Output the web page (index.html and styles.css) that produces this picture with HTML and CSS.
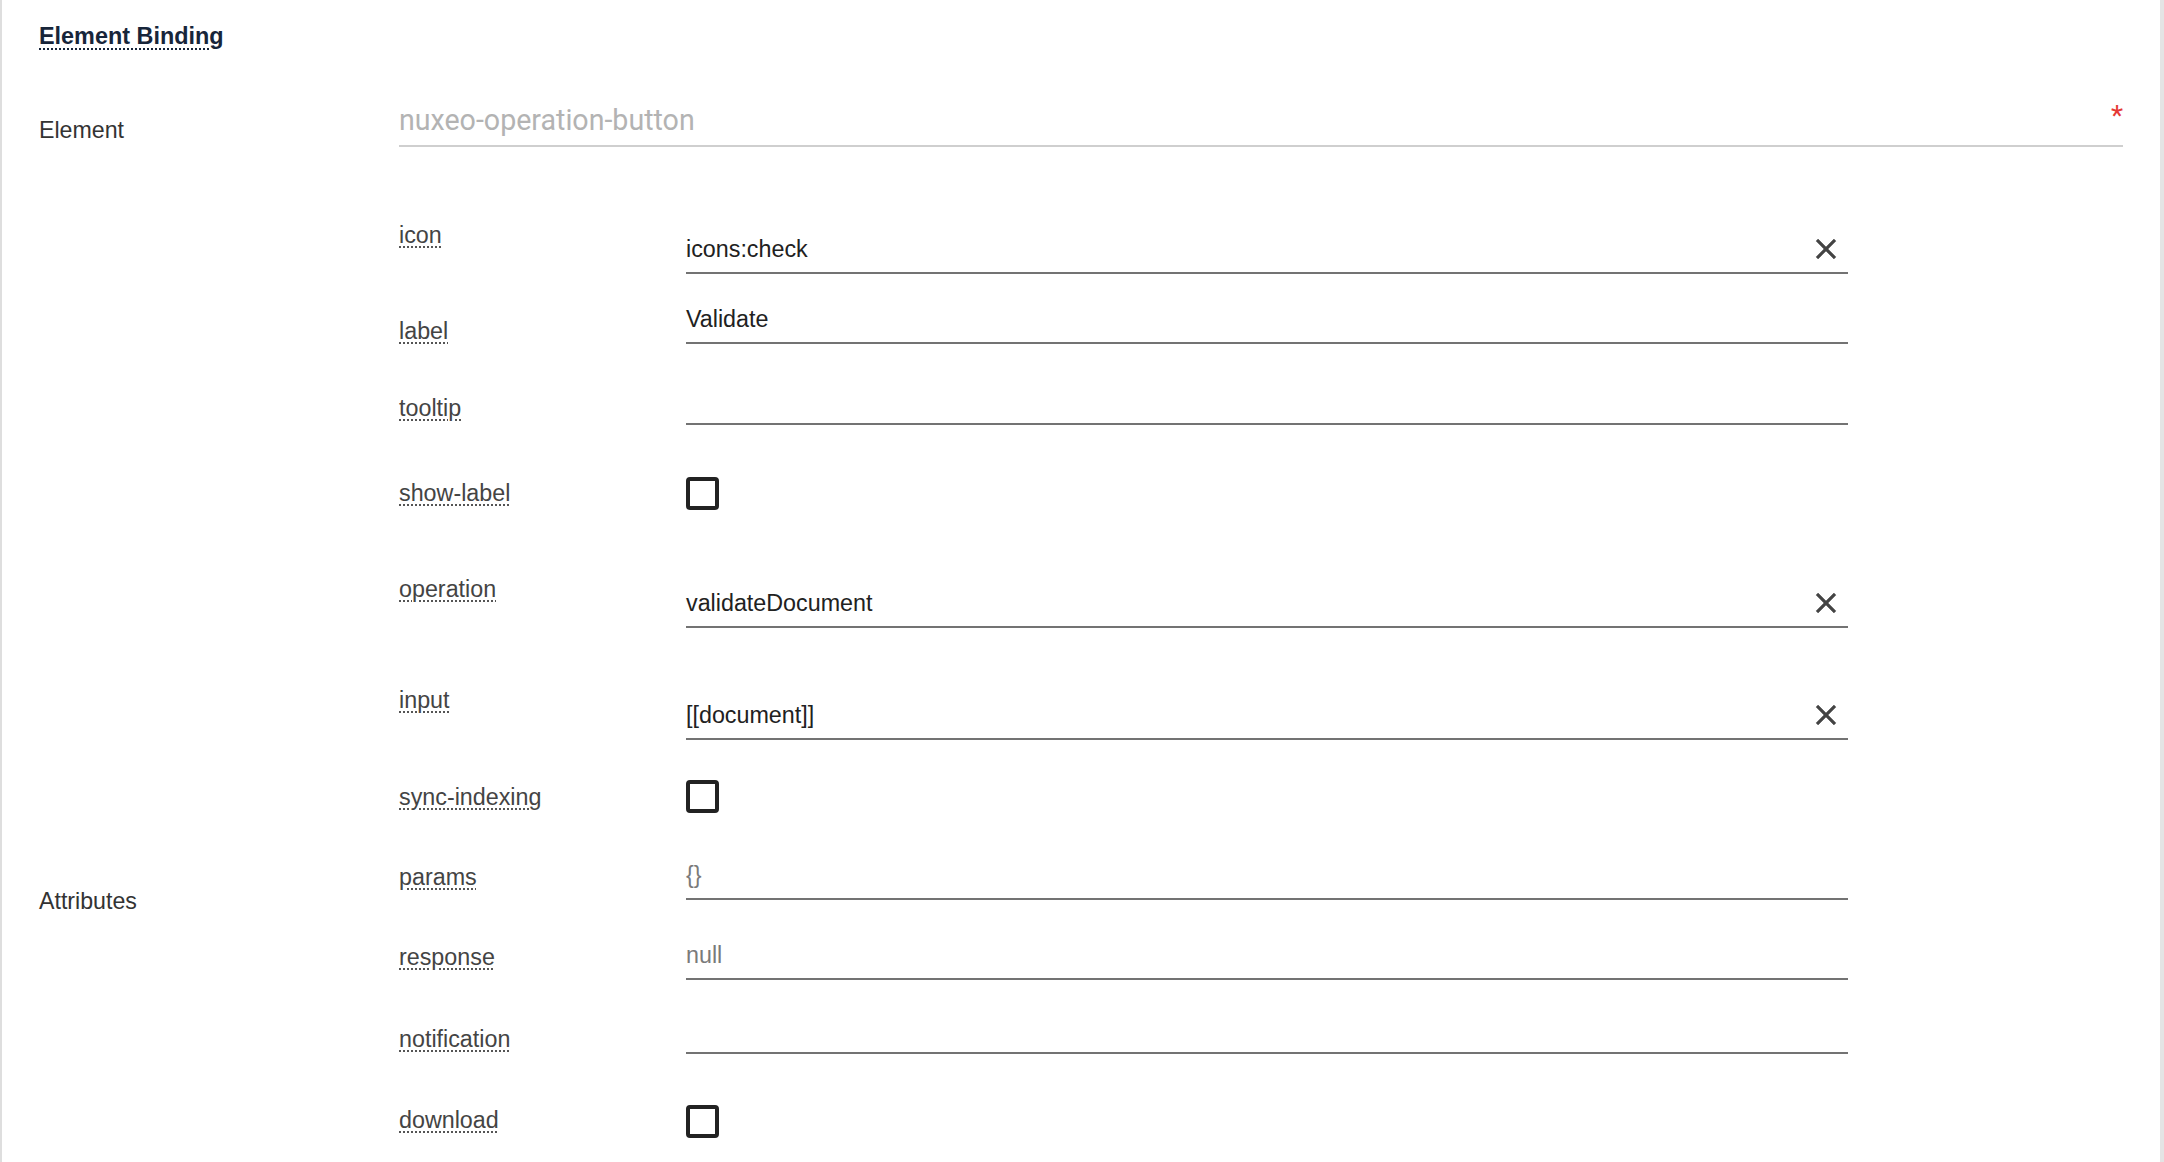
FILE: index.html
```html
<!DOCTYPE html>
<html lang="en">
<head>
<meta charset="utf-8">
<title>Element Binding</title>
<link rel="stylesheet" href="styles.css">
</head>
<body>
<div class="page">
  <h2 class="title"><abbr title="Element Binding">Element Binding</abbr></h2>

  <div class="section sec-element">
    <div class="sec-label">Element</div>
    <div class="el-field">
      <span class="el-placeholder">nuxeo-operation-button</span>
      <span class="req">*</span>
    </div>
  </div>

  <div class="section sec-attrs">
    <div class="sec-label attrs-label">Attributes</div>
    <div class="attrs">
      <div class="row r-icon">
        <div class="lbl"><abbr title="icon">icon</abbr></div>
        <div class="fld text"><span class="val">icons:check</span><svg class="clear-ico" viewBox="0 0 24 24"><path d="M19 6.41L17.59 5 12 10.59 6.41 5 5 6.41 10.59 12 5 17.59 6.41 19 12 13.41 17.59 19 19 17.59 13.41 12z"/></svg></div>
      </div>
      <div class="row r-label">
        <div class="lbl"><abbr title="label">label</abbr></div>
        <div class="fld text"><span class="val">Validate</span></div>
      </div>
      <div class="row r-tooltip">
        <div class="lbl"><abbr title="tooltip">tooltip</abbr></div>
        <div class="fld text"><span class="val"></span></div>
      </div>
      <div class="row r-show">
        <div class="lbl"><abbr title="show-label">show-label</abbr></div>
        <div class="fld"><div class="cb"></div></div>
      </div>
      <div class="row r-op">
        <div class="lbl"><abbr title="operation">operation</abbr></div>
        <div class="fld text"><span class="val">validateDocument</span><svg class="clear-ico" viewBox="0 0 24 24"><path d="M19 6.41L17.59 5 12 10.59 6.41 5 5 6.41 10.59 12 5 17.59 6.41 19 12 13.41 17.59 19 19 17.59 13.41 12z"/></svg></div>
      </div>
      <div class="row r-input">
        <div class="lbl"><abbr title="input">input</abbr></div>
        <div class="fld text"><span class="val">[[document]]</span><svg class="clear-ico" viewBox="0 0 24 24"><path d="M19 6.41L17.59 5 12 10.59 6.41 5 5 6.41 10.59 12 5 17.59 6.41 19 12 13.41 17.59 19 19 17.59 13.41 12z"/></svg></div>
      </div>
      <div class="row r-sync">
        <div class="lbl"><abbr title="sync-indexing">sync-indexing</abbr></div>
        <div class="fld"><div class="cb"></div></div>
      </div>
      <div class="row r-params">
        <div class="lbl"><abbr title="params">params</abbr></div>
        <div class="fld text"><span class="val ph">{}</span></div>
      </div>
      <div class="row r-resp">
        <div class="lbl"><abbr title="response">response</abbr></div>
        <div class="fld text"><span class="val ph">null</span></div>
      </div>
      <div class="row r-notif">
        <div class="lbl"><abbr title="notification">notification</abbr></div>
        <div class="fld text"><span class="val"></span></div>
      </div>
      <div class="row r-dl">
        <div class="lbl"><abbr title="download">download</abbr></div>
        <div class="fld"><div class="cb"></div></div>
      </div>
    </div>
  </div>
</div>
</body>
</html>
```

FILE: styles.css
```css
html, body {
  margin: 0;
  padding: 0;
  background: #ffffff;
  overflow: hidden;
}

body {
  font-family: "Liberation Sans", Arial, Helvetica, sans-serif;
}

.page {
  box-sizing: border-box;
  width: 2164px;
  min-height: 1162px;
  border-left: 2px solid #dedede;
  border-right: 4px solid #e4e4e4;
  padding: 22px 37px 0 37px;
}

.title {
  margin: 0;
  font-size: 23.4px;
  line-height: 28px;
  font-weight: 700;
  color: #17253a;
}

.title abbr {
  text-decoration: underline dotted;
  text-decoration-thickness: 2px;
  text-underline-offset: 4px;
}

.section {
  display: grid;
  grid-template-columns: 360px 1fr;
  align-items: start;
}

.sec-element {
  margin-top: 53px;
}

.sec-label {
  font-size: 23.2px;
  line-height: 28px;
  color: #333333;
}

.sec-element .sec-label {
  margin-top: 13px;
}

.el-field {
  display: flex;
  align-items: flex-start;
  border-bottom: 2px solid #cfcfcf;
  padding-bottom: 8px;
}

.el-placeholder {
  flex: 1;
  font-family: Roboto, "Liberation Sans", sans-serif;
  font-size: 28.6px;
  line-height: 34px;
  color: #b3b3b3;
}

.req {
  font-family: Roboto, "Liberation Sans", sans-serif;
  font-size: 28px;
  line-height: 26px;
  color: #e53935;
}

.sec-attrs {
  margin-top: 74px;
}

.attrs-label {
  margin-top: 666px;
}

.attrs {
  display: flex;
  flex-direction: column;
}

.row {
  display: grid;
  grid-template-columns: 287px 1162px;
  align-items: start;
}

.lbl {
  margin-top: var(--lm, 0px);
  font-size: 23.3px;
  line-height: 28px;
  color: #444444;
}

.lbl abbr {
  text-decoration: underline dotted;
  text-decoration-thickness: 2px;
  text-underline-offset: 3px;
  text-decoration-color: #555555;
}

.fld {
  margin-top: var(--fm, 0px);
}

.text {
  display: flex;
  align-items: flex-start;
  border-bottom: 2px solid #737373;
  padding-bottom: 10px;
  font-size: 23.3px;
  line-height: 28px;
  color: #212121;
}

.val {
  flex: 1;
  min-height: 28px;
  padding-top: 1px;
  margin-bottom: -1px;
}

.ph {
  color: #7a7a7a;
}

.clear-ico {
  flex: none;
  width: 34px;
  height: 34px;
  margin: -2px 5px -4px 0;
  fill: #444444;
  stroke: #444444;
  stroke-width: 0.35;
}

.cb {
  box-sizing: border-box;
  width: 33px;
  height: 33px;
  border: 4px solid #222222;
  border-radius: 4px;
}

.r-icon   { height: 83px;  --lm: 0px;  --fm: 13px; }
.r-label  { height: 81px;  --lm: 13px; --fm: 0px; }
.r-tooltip{ height: 92px;  --lm: 9px;  --fm: 0px; }
.r-show   { height: 98px;  --lm: 2px;  --fm: 0px; }
.r-op     { height: 111px; --lm: 0px;  --fm: 13px; }
.r-input  { height: 94px;  --lm: 0px;  --fm: 14px; }
.r-sync   { height: 80px;  --lm: 3px;  --fm: 0px; }
.r-params { height: 80px;  --lm: 3px;  --fm: 0px; }
.r-resp   { height: 74px;  --lm: 3px;  --fm: 0px; }
.r-notif  { height: 91px;  --lm: 11px; --fm: 0px; }
.r-dl     { height: 60px;  --lm: 1px;  --fm: 0px; }
```
